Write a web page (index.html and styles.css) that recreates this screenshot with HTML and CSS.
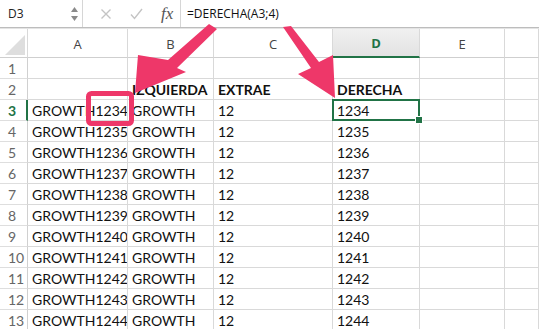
FILE: index.html
```html
<!DOCTYPE html>
<html lang="es">
<head>
<meta charset="utf-8">
<link rel="stylesheet" href="styles.css">
</head>
<body>
<div class="app">
  <div class="fbar">
    <div class="namebox">
      <span class="name">D3</span>
      <svg class="spin" width="9" height="16" viewBox="0 0 9 16"><path d="M4.5 1 L8 6 L1 6 Z" fill="#8a8a8a"/><path d="M4.5 15 L8 10 L1 10 Z" fill="#8a8a8a"/></svg>
    </div>
    <div class="actions">
      <svg class="ico" width="12" height="12" viewBox="0 0 12 12"><path d="M1.5 1.5 L10.5 10.5 M10.5 1.5 L1.5 10.5" stroke="#c4c4c4" stroke-width="1.4" fill="none"/></svg>
      <svg class="ico check" width="13" height="12" viewBox="0 0 13 12"><path d="M1 6.5 L4.5 10.5 L12 1" stroke="#c4c4c4" stroke-width="1.4" fill="none"/></svg>
      <span class="fx">fx</span>
    </div>
    <div class="formula">=DERECHA(A3;4)</div>
  </div>
  <div class="sheet">
    <div class="ch corner"><svg width="20" height="20" viewBox="0 0 20 20"><path d="M20 0 L20 20 L0 20 Z" fill="#dedede"/></svg></div>
    <div class="ch">A</div><div class="ch">B</div><div class="ch">C</div><div class="ch active">D</div><div class="ch">E</div><div class="ch"></div>

    <div class="rh">1</div><div class="c"></div><div class="c"></div><div class="c"></div><div class="c"></div><div class="c"></div><div class="c"></div>
    <div class="rh">2</div><div class="c"></div><div class="c b">IZQUIERDA</div><div class="c b">EXTRAE</div><div class="c b">DERECHA</div><div class="c"></div><div class="c"></div>
    <div class="rh activerow">3</div><div class="c">GROWTH1234</div><div class="c">GROWTH</div><div class="c">12</div><div class="c sel">1234</div><div class="c"></div><div class="c"></div>
    <div class="rh">4</div><div class="c">GROWTH1235</div><div class="c">GROWTH</div><div class="c">12</div><div class="c">1235</div><div class="c"></div><div class="c"></div>
    <div class="rh">5</div><div class="c">GROWTH1236</div><div class="c">GROWTH</div><div class="c">12</div><div class="c">1236</div><div class="c"></div><div class="c"></div>
    <div class="rh">6</div><div class="c">GROWTH1237</div><div class="c">GROWTH</div><div class="c">12</div><div class="c">1237</div><div class="c"></div><div class="c"></div>
    <div class="rh">7</div><div class="c">GROWTH1238</div><div class="c">GROWTH</div><div class="c">12</div><div class="c">1238</div><div class="c"></div><div class="c"></div>
    <div class="rh">8</div><div class="c">GROWTH1239</div><div class="c">GROWTH</div><div class="c">12</div><div class="c">1239</div><div class="c"></div><div class="c"></div>
    <div class="rh">9</div><div class="c">GROWTH1240</div><div class="c">GROWTH</div><div class="c">12</div><div class="c">1240</div><div class="c"></div><div class="c"></div>
    <div class="rh">10</div><div class="c">GROWTH1241</div><div class="c">GROWTH</div><div class="c">12</div><div class="c">1241</div><div class="c"></div><div class="c"></div>
    <div class="rh">11</div><div class="c">GROWTH1242</div><div class="c">GROWTH</div><div class="c">12</div><div class="c">1242</div><div class="c"></div><div class="c"></div>
    <div class="rh">12</div><div class="c">GROWTH1243</div><div class="c">GROWTH</div><div class="c">12</div><div class="c">1243</div><div class="c"></div><div class="c"></div>
    <div class="rh">13</div><div class="c">GROWTH1244</div><div class="c">GROWTH</div><div class="c">12</div><div class="c">1244</div><div class="c"></div><div class="c"></div>
  </div>
  <svg class="annot" width="539" height="329" viewBox="0 0 539 329">
    <rect x="88.5" y="93.5" width="43" height="30" rx="3" ry="3" fill="none" stroke="#ee3769" stroke-width="5"/>
    <path d="M209 24 L217 29 L177 68 L186 72 L135 93 L138 55 L168 60 Z" fill="#ee3769"/>
    <path d="M283 27 L291 26 L319 62 L333 55 L335 98 L298 74 L311 68 Z" fill="#ee3769"/>
  </svg>
</div>
</body>
</html>
```
FILE: styles.css
```css
* { box-sizing: border-box; }
body { margin: 0; background: #fff; font-family: Lato, "Liberation Sans", sans-serif; }
.app { position: relative; width: 539px; height: 329px; overflow: hidden; }

.fbar {
  display: flex;
  align-items: stretch;
  height: 28px;
  border-bottom: 1px solid #bdbdbd;
  box-shadow: 0 1px 0 #e4e4e4;
  font-family: "Open Sans", "Liberation Sans", sans-serif;
}
.namebox {
  width: 83px;
  display: flex;
  align-items: center;
  justify-content: space-between;
  padding: 0 3px 0 8px;
  border-right: 1px solid #d6d6d6;
}
.name { font-size: 12px; color: #222; }
.spin { display: block; }
.actions {
  width: 98px;
  display: flex;
  align-items: center;
  padding-left: 17px;
  gap: 16px;
  border-right: 1px solid #d6d6d6;
}
.ico { display: block; }
.check { margin-left: 2px; }
.fx {
  font-family: "Liberation Serif", serif;
  font-style: italic;
  font-size: 17px;
  color: #555;
  margin-left: 2px;
}
.formula {
  display: flex;
  align-items: center;
  padding-left: 6px;
  font-size: 12px;
  color: #111;
}

.sheet {
  margin-top: 1px;
  display: grid;
  grid-template-columns: 28px 100px 86px 119px 87px 85px 34px;
  grid-template-rows: 29px repeat(13, 21px);
}
.ch {
  border-right: 1px solid #d9d9d9;
  border-bottom: 1px solid #cfcfcf;
  display: flex;
  align-items: center;
  justify-content: center;
  font-family: "Open Sans", "Liberation Sans", sans-serif;
  font-size: 13px;
  color: #444;
  padding-top: 1px;
}
.corner { justify-content: flex-end; align-items: flex-end; padding: 0 2px 2px 0; }
.corner svg { display: block; }
.ch.active {
  background: linear-gradient(#f0f0f0, #e3e3e3);
  border-bottom: 2px solid #217346;
  color: #217346;
  font-weight: 700;
}
.rh {
  border-right: 1px solid #d0d0d0;
  border-bottom: 1px solid #dedede;
  display: flex;
  align-items: flex-end;
  padding: 0 0 1px 8px;
  font-size: 14px;
  line-height: 17px;
  color: #666;
}
.rh.activerow { color: #217346; font-weight: 700; border-right: 2px solid #217346; }
.c {
  border-right: 1px solid #d9d9d9;
  border-bottom: 1px solid #d9d9d9;
  display: flex;
  align-items: flex-end;
  padding: 0 0 1px 4px;
  font-size: 14px;
  line-height: 17px;
  color: #111;
  white-space: nowrap;
  overflow: hidden;
}
.c.b { font-weight: 700; }
.sel { position: relative; overflow: visible; }
.sel::after {
  content: "";
  position: absolute;
  left: -1px; top: -1px; right: -1px; bottom: -1px;
  border: 2px solid #217346;
}
.sel::before {
  content: "";
  position: absolute;
  right: -4px; bottom: -4px;
  width: 6px; height: 6px;
  background: #217346;
  border: 1px solid #fff;
  z-index: 1;
}
.annot { position: absolute; left: 0; top: 0; pointer-events: none; }
```
